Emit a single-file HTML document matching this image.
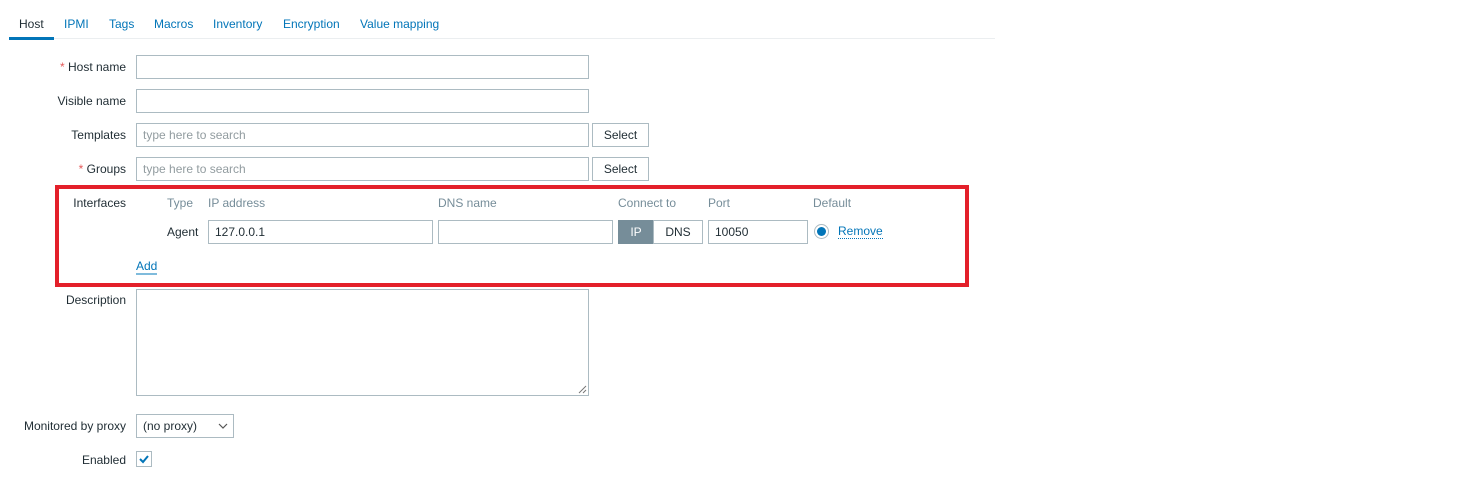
<!DOCTYPE html><html><head><style>
body{margin:0;background:#fff;font-family:"Liberation Sans",Arial,sans-serif;font-size:12px;color:#1f2c33;width:1470px;height:477px;position:relative;overflow:hidden}
.a{position:absolute}
.t{position:absolute;top:17px;color:#0275b8}
.lbl{position:absolute;right:1344px;text-align:right;white-space:nowrap}
.in{position:absolute;border:1px solid #acbbc2;background:#fff;box-sizing:border-box;height:24px;padding-left:6px;line-height:22px}
.ph{color:#929ca0}
.btn{position:absolute;border:1px solid #acbbc2;box-sizing:border-box;height:24px;line-height:22px;text-align:center;background:#fff}
.h{position:absolute;top:196px;color:#768d99}
.star{color:#e45959}
</style></head><body>
<div class="t" style="left:19px;color:#1f2c33">Host</div>
<div class="t" style="left:64px">IPMI</div>
<div class="t" style="left:109px">Tags</div>
<div class="t" style="left:154px">Macros</div>
<div class="t" style="left:213px">Inventory</div>
<div class="t" style="left:283px">Encryption</div>
<div class="t" style="left:360px">Value mapping</div>
<div class="a" style="left:9px;top:38px;width:986px;height:1px;background:#ebeef0"></div>
<div class="a" style="left:9px;top:37px;width:45px;height:3px;background:#0275b8"></div>

<div class="lbl" style="top:60px"><span class="star">*</span> Host name</div>
<div class="in" style="left:136px;top:55px;width:453px"></div>
<div class="lbl" style="top:94px">Visible name</div>
<div class="in" style="left:136px;top:89px;width:453px"></div>
<div class="lbl" style="top:128px">Templates</div>
<div class="in ph" style="left:136px;top:123px;width:453px">type here to search</div>
<div class="btn" style="left:592px;top:123px;width:57px">Select</div>
<div class="lbl" style="top:162px"><span class="star">*</span> Groups</div>
<div class="in ph" style="left:136px;top:157px;width:453px">type here to search</div>
<div class="btn" style="left:592px;top:157px;width:57px">Select</div>

<div class="a" style="left:55px;top:185px;width:914px;height:102px;border:4px solid #e3202a;box-sizing:border-box"></div>
<div class="lbl" style="top:196px">Interfaces</div>
<div class="h" style="left:167px">Type</div>
<div class="h" style="left:208px">IP address</div>
<div class="h" style="left:438px">DNS name</div>
<div class="h" style="left:618px">Connect to</div>
<div class="h" style="left:708px">Port</div>
<div class="h" style="left:813px">Default</div>
<div class="a" style="left:167px;top:225px">Agent</div>
<div class="in" style="left:208px;top:220px;width:225px">127.0.0.1</div>
<div class="in" style="left:438px;top:220px;width:175px"></div>
<div class="btn" style="left:618px;top:220px;width:36px;background:#768d99;border-color:#768d99;color:#fff">IP</div>
<div class="btn" style="left:653px;top:220px;width:50px">DNS</div>
<div class="in" style="left:708px;top:220px;width:100px">10050</div>
<div class="a" style="left:814px;top:224px;width:15px;height:15px;border:1px solid #acbbc2;border-radius:50%;box-sizing:border-box"></div>
<div class="a" style="left:817px;top:227px;width:9px;height:9px;border-radius:50%;background:#0275b8"></div>
<div class="a" style="left:838px;top:225px;color:#0275b8;border-bottom:1px dotted #0275b8;line-height:13px">Remove</div>
<div class="a" style="left:136px;top:259px;color:#0275b8;border-bottom:2px solid #7fbbdc;line-height:14px">Add</div>

<div class="lbl" style="top:293px">Description</div>
<div class="in" style="left:136px;top:289px;width:453px;height:107px"></div>
<svg class="a" style="left:578px;top:385px" width="9" height="9"><path d="M8 1L1 8M8 5L5 8" stroke="#777" stroke-width="1"/></svg>

<div class="lbl" style="top:419px">Monitored by proxy</div>
<div class="in" style="left:136px;top:414px;width:98px">(no proxy)</div>
<svg class="a" style="left:218px;top:422px" width="10" height="8"><path d="M1 2L5 6L9 2" stroke="#555" fill="none" stroke-width="1.2"/></svg>
<div class="lbl" style="top:453px">Enabled</div>
<div class="a" style="left:136px;top:451px;width:16px;height:16px;border:1px solid #acbbc2;box-sizing:border-box"></div>
<svg class="a" style="left:138px;top:453px" width="12" height="12"><path d="M2 6L5 9L10 3" stroke="#0275b8" fill="none" stroke-width="2"/></svg>
</body></html>
